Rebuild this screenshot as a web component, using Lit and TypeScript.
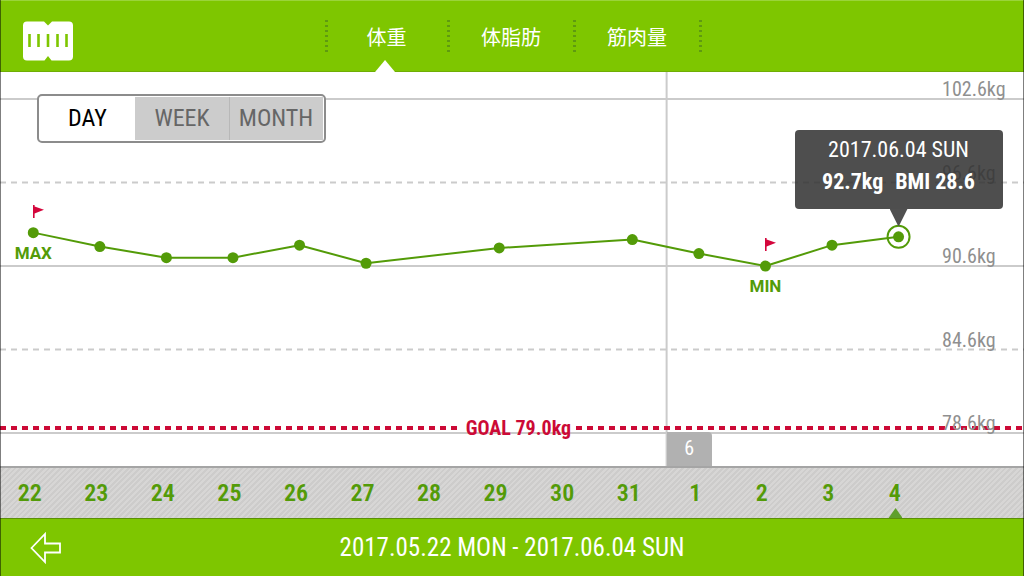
import { LitElement, html, svg, css } from "lit";
import { customElement, state } from "lit/decorators.js";
import { classMap } from "lit/directives/class-map.js";
import { styleMap } from "lit/directives/style-map.js";

interface Day {
  label: string;
  weight?: number;
  mark?: "MAX" | "MIN";
}

const DAYS: Day[] = [
  { label: "22", weight: 93.0, mark: "MAX" },
  { label: "23", weight: 92.0 },
  { label: "24", weight: 91.2 },
  { label: "25", weight: 91.2 },
  { label: "26", weight: 92.1 },
  { label: "27", weight: 90.8 },
  { label: "28" },
  { label: "29", weight: 91.9 },
  { label: "30" },
  { label: "31", weight: 92.5 },
  { label: "1", weight: 91.5 },
  { label: "2", weight: 90.6, mark: "MIN" },
  { label: "3", weight: 92.1 },
  { label: "4", weight: 92.7 },
];

const GRID = [102.6, 96.6, 90.6, 84.6, 78.6];
const GOAL = 79.0;
const STEP = 6.5;

// Horizontal centre of a day and height of a weight, both in percent of the chart.
const xOf = (index: number): number => STEP / 2 + index * STEP;
const yOf = (kg: number): number => 6.85 + ((102.6 - kg) / 24) * 84.8;

@customElement("weight-chart")
export class WeightChart extends LitElement {
  static styles = css`
    :host {
      display: block;
      position: relative;
      background: #fff;
    }
    .plot {
      position: absolute;
      inset: 0;
      width: 100%;
      height: 100%;
    }
    .grid {
      stroke: #cbcbcb;
      stroke-width: 2;
    }
    .dashed {
      stroke-dasharray: 6 5;
    }
    .line {
      stroke: #539b08;
      stroke-width: 2;
    }
    .dot {
      fill: #539b08;
    }
    .ring {
      fill: #fff;
      stroke: #539b08;
      stroke-width: 2;
    }
    .scale {
      position: absolute;
      left: 92%;
      transform: translateY(-100%);
      font-size: 20px;
      line-height: 20px;
      color: #8f8f8f;
    }
    .month {
      position: absolute;
      left: 65.1%;
      bottom: 0;
      width: 45px;
      height: 34px;
      box-sizing: border-box;
      padding-top: 4px;
      border-radius: 0 4px 0 0;
      background: #b1b1b1;
      color: #fff;
      font-size: 20px;
      line-height: 24px;
      text-align: center;
    }
    .goal {
      position: absolute;
      left: 0;
      right: 0;
      transform: translateY(-50%);
      display: flex;
      align-items: center;
      gap: 5px;
      color: #cc0a36;
      font-size: 20px;
      line-height: 24px;
      font-weight: 700;
    }
    .goal::before,
    .goal::after {
      content: "";
      flex: 1;
      height: 4px;
      background: repeating-linear-gradient(90deg, #cc0a36 0 6px, #fff 6px 11px);
    }
    .goal::before {
      flex: 0 0 45%;
    }
    .mark {
      position: absolute;
      transform: translateX(-50%);
      color: #539b08;
      font: 700 17px/20px Roboto, sans-serif;
      padding-top: 10px;
    }
    .flag {
      position: absolute;
      width: 11px;
      height: 13px;
      margin-top: -28px;
    }
    .tip {
      position: absolute;
      transform: translate(-50%, -100%);
      padding-bottom: 28px;
    }
    .bubble {
      position: relative;
      width: 208px;
      padding: 4px 0 11px;
      border-radius: 4px;
      background: rgba(52, 52, 52, 0.87);
      color: #fff;
      font-size: 22px;
      line-height: 32px;
      text-align: center;
    }
    .bubble::after {
      content: "";
      position: absolute;
      top: 100%;
      left: 50%;
      width: 18px;
      height: 18px;
      transform: translateX(-50%);
      background: #505050;
      clip-path: polygon(0 0, 100% 0, 50% 100%);
    }
    .values {
      display: flex;
      justify-content: center;
      gap: 12px;
      font-weight: 700;
    }
  `;

  private renderPlot() {
    const points = DAYS.map((d, i) => ({ x: xOf(i), kg: d.weight })).filter(
      (p): p is { x: number; kg: number } => p.kg !== undefined,
    );
    const last = points[points.length - 1];
    return html`<svg class="plot" aria-hidden="true">
      ${GRID.map(
        (kg, i) => svg`<line class=${classMap({ grid: true, dashed: i % 2 === 1 })}
          x1="0" x2="100%" y1="${yOf(kg)}%" y2="${yOf(kg)}%"></line>`,
      )}
      <line class="grid" x1="65.1%" x2="65.1%" y1="0" y2="100%"></line>
      <circle class="ring" cx="${last.x}%" cy="${yOf(last.kg)}%" r="11"></circle>
      ${points.slice(1).map(
        (p, i) => svg`<line class="line" x1="${points[i].x}%" y1="${yOf(points[i].kg)}%"
          x2="${p.x}%" y2="${yOf(p.kg)}%"></line>`,
      )}
      ${points.map((p) => svg`<circle class="dot" cx="${p.x}%" cy="${yOf(p.kg)}%" r="5.5"></circle>`)}
    </svg>`;
  }

  render() {
    const lastIndex = DAYS.length - 1;
    return html`
      ${this.renderPlot()}
      <div class="month">6</div>
      <div class="goal" style=${styleMap({ top: `${yOf(GOAL)}%` })}>GOAL ${GOAL.toFixed(1)}kg</div>
      ${GRID.map(
        (kg) => html`<span class="scale" style=${styleMap({ top: `${yOf(kg)}%` })}>${kg.toFixed(1)}kg</span>`,
      )}
      ${DAYS.map((d, i) => {
        if (!d.mark || d.weight === undefined) return null;
        const at = styleMap({ left: `${xOf(i)}%`, top: `${yOf(d.weight)}%` });
        return html`
          <svg class="flag" style=${at} viewBox="0 0 11 13" aria-hidden="true">
            <path d="M0 0H1.6V1.4L11 4.8L1.6 8.4V13H0Z" fill="#d4063c"></path>
          </svg>
          <span class="mark" style=${at}>${d.mark}</span>
        `;
      })}
      <div
        class="tip"
        style=${styleMap({ left: `${xOf(lastIndex)}%`, top: `${yOf(DAYS[lastIndex].weight!)}%` })}
      >
        <div class="bubble">
          <div>2017.06.04 SUN</div>
          <div class="values"><span>92.7kg</span><span>BMI 28.6</span></div>
        </div>
      </div>
    `;
  }
}

@customElement("app-root")
export class AppRoot extends LitElement {
  static styles = css`
    :host {
      display: flex;
      flex-direction: column;
      min-height: 100vh;
      position: relative;
      font-family: "Roboto Condensed", "Noto Sans CJK JP", sans-serif;
    }
    :host::after {
      content: "";
      position: absolute;
      inset: 0;
      border: 1px solid rgba(0, 0, 0, 0.5);
      border-width: 0 1px;
      pointer-events: none;
    }
    button {
      border: 0;
      margin: 0;
      padding: 0;
      background: none;
      font: inherit;
      color: inherit;
      cursor: pointer;
    }
    header,
    footer {
      display: grid;
      grid-template-columns: 1fr auto 1fr;
      align-items: center;
      background: #7ec600;
      color: #fff;
      box-sizing: border-box;
    }
    header {
      height: 72px;
      padding: 0 20px 0 23px;
      border-top: 1px solid #9ad43a;
      border-bottom: 1px solid #6fae05;
    }
    .logo {
      justify-self: start;
      height: 40px;
      margin-top: 8px;
    }
    .tabs {
      display: flex;
      height: 71px;
      position: relative;
    }
    .tab {
      position: relative;
      min-width: 123px;
      padding: 0 34px 0 32px;
      font: 400 20px/24px "Noto Sans CJK JP", sans-serif;
    }
    .tab::after,
    .tabs::before {
      content: "";
      position: absolute;
      top: 19px;
      right: -1px;
      width: 3px;
      height: 33px;
      background: repeating-linear-gradient(#5f9a10 0 2px, transparent 2px 5px);
    }
    .tabs::before {
      left: -1px;
    }
    .active::before {
      content: "";
      position: absolute;
      left: 48%;
      bottom: 0;
      width: 20px;
      height: 12px;
      transform: translateX(-50%);
      background: #fff;
      clip-path: polygon(50% 0, 100% 100%, 0 100%);
    }
    main {
      flex: 1;
      display: flex;
      flex-direction: column;
      position: relative;
    }
    weight-chart {
      flex: 1;
    }
    .range {
      position: absolute;
      left: 37px;
      top: 22px;
      display: grid;
      grid-template-columns: 95px 94px 94px;
      box-sizing: border-box;
      padding: 1px;
      border: 2px solid #8c8c8c;
      border-radius: 5px;
      background: #fff;
      font-size: 24px;
      line-height: 43px;
      color: #666;
    }
    .range button {
      background: #ccc;
    }
    .range button + button + button {
      box-shadow: inset 1px 0 #b8b8b8;
    }
    .range .on {
      background: #fff;
      color: #000;
    }
    .days {
      display: grid;
      grid-template-columns: repeat(14, 6.5%);
      align-items: center;
      height: 52px;
      margin: 0;
      padding: 0;
      list-style: none;
      border-top: 2px solid #a5a5a5;
      box-sizing: border-box;
      background: repeating-linear-gradient(135deg, #d7d6d5 0 2px, #cdcccb 2px 4px);
      color: #539b08;
      font-size: 24px;
      font-weight: 600;
      line-height: 50px;
      text-align: center;
    }
    .days li {
      position: relative;
      padding-right: 7px;
    }
    .days .current::after {
      content: "";
      position: absolute;
      left: 50%;
      bottom: 0;
      width: 14px;
      height: 10px;
      transform: translateX(-70%);
      background: #5f9f2c;
      clip-path: polygon(50% 0, 100% 100%, 0 100%);
    }
    footer {
      height: 58px;
      padding: 0 30px;
      border-top: 1px solid #5c8f08;
      font-size: 25px;
      line-height: 32px;
    }
    .back {
      justify-self: start;
      display: flex;
    }
  `;

  @state() private metric = "体重";
  @state() private range = "DAY";

  render() {
    return html`
      <header>
        <svg class="logo" width="50" height="40" viewBox="0 0 50 40" role="img" aria-label="Logo">
          <path
            d="M4 0.5H21L25 4.5L29 0.5H46Q50 0.5 50 4.5V35.5Q50 39.5 46 39.5H28.5L25 35L21.5 39.5H4Q0 39.5 0 35.5V4.5Q0 0.5 4 0.5Z"
            fill="#fff"
          ></path>
          <path d="M6.5 13V26M15.5 13V26M25 13V26M34.5 13V26M43.5 13V26" stroke="#7ec600" stroke-width="2.6"></path>
        </svg>
        <nav class="tabs">
          ${["体重", "体脂肪", "筋肉量"].map(
            (name) => html`<button
              class=${classMap({ tab: true, active: name === this.metric })}
              @click=${() => (this.metric = name)}
            >${name}</button>`,
          )}
        </nav>
      </header>
      <main>
        <weight-chart></weight-chart>
        <div class="range">
          ${["DAY", "WEEK", "MONTH"].map(
            (name) => html`<button
              class=${classMap({ on: name === this.range })}
              aria-pressed=${name === this.range}
              @click=${() => (this.range = name)}
            >${name}</button>`,
          )}
        </div>
        <ol class="days">
          ${DAYS.map(
            (d, i) => html`<li class=${classMap({ current: i === DAYS.length - 1 })}>${d.label}</li>`,
          )}
        </ol>
      </main>
      <footer>
        <button class="back" aria-label="Back">
          <svg width="32" height="32" viewBox="0 0 32 32" aria-hidden="true">
            <path
              d="M1.5 16L15 2V11.5H30V20.5H15V30Z"
              fill="none"
              stroke="#fff"
              stroke-width="1.8"
            ></path>
          </svg>
        </button>
        <span>2017.05.22 MON - 2017.06.04 SUN</span>
      </footer>
    `;
  }
}
